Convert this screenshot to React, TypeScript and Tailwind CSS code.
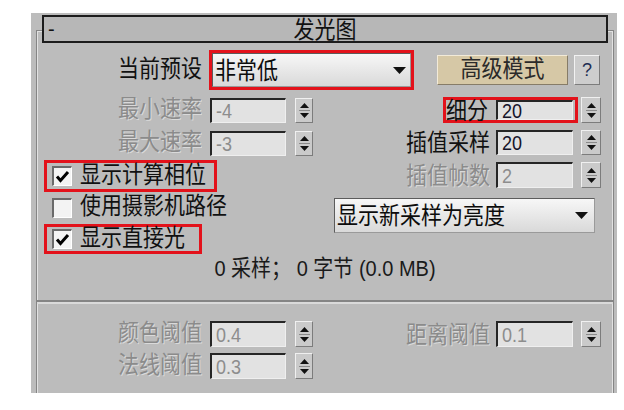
import type { ReactNode } from "react";

const Label = ({ children, dim }: { children: ReactNode; dim?: boolean }) => (
  <span
    className={
      dim
        ? "inline-block scale-y-[1.12] text-[21px] leading-none text-[#8b8b8b] [text-shadow:1px_1px_0_#dadada]"
        : "inline-block scale-y-[1.12] text-[21px] leading-none text-[#111]"
    }
  >
    {children}
  </span>
);

const Field = ({ value, dim, className }: { value: string; dim?: boolean; className: string }) => (
  <div
    className={`${className} flex items-center pl-[4px] bg-[#e2e2e2] border-t-2 border-l-2 border-t-[#262626] border-l-[#262626] border-b border-r border-b-[#efefef] border-r-[#efefef] text-[18px] leading-none ${
      dim ? "text-[#8d8d8d]" : "text-[#15152a]"
    }`}
  >
    <span className="inline-block scale-y-[1.15]">{value}</span>
  </div>
);

const Spinner = ({ className }: { className: string }) => (
  <div
    className={`${className} flex flex-col items-center justify-center gap-[2px] bg-[#cacaca] border border-t-[#f0f0f0] border-l-[#f0f0f0] border-b-[#7c7c7c] border-r-[#7c7c7c]`}
  >
    <svg width="9" height="5" viewBox="0 0 9 5">
      <path d="M0 5L4.5 0L9 5Z" fill="#111" />
    </svg>
    <div className="w-[11px] h-px bg-[#8a8a8a]" />
    <svg width="9" height="5" viewBox="0 0 9 5">
      <path d="M0 0H9L4.5 5Z" fill="#111" />
    </svg>
  </div>
);

const Check = ({ checked }: { checked?: boolean }) => (
  <div className="w-[20px] h-[20px] shrink-0 bg-[#f3f3f3] border-t-2 border-l-2 border-t-[#6a6a6a] border-l-[#6a6a6a] border-b border-r border-b-[#ffffff] border-r-[#ffffff] flex items-center justify-center">
    {checked && (
      <svg width="16" height="16" viewBox="0 0 16 16">
        <path d="M2 7.5L5.5 11.5L13 3" stroke="#000" strokeWidth="3" fill="none" />
      </svg>
    )}
  </div>
);

const Combo = ({ text, className }: { text: string; className: string }) => (
  <div
    className={`${className} flex items-center justify-between bg-linear-to-b from-[#f7f7f7] to-[#d9d9d9] border border-t-[#5c5c5c] border-l-[#5c5c5c] border-b-[#9a9a9a] border-r-[#9a9a9a]`}
  >
    <span className="inline-block scale-y-[1.12] text-[21px] leading-none text-[#0c0c0c]">{text}</span>
    <svg width="13" height="7" viewBox="0 0 13 7">
      <path d="M0 0H13L6.5 7Z" fill="#111" />
    </svg>
  </div>
);

const LeftNumRow = ({ label, value, className }: { label: string; value: string; className: string }) => (
  <div className={`${className} flex items-center`}>
    <div className="w-[165px] text-right">
      <Label dim>{label}</Label>
    </div>
    <Field value={value} dim className="ml-[8px] w-[76px] h-full" />
    <Spinner className="ml-[9px] w-[18px] h-full" />
  </div>
);

const RightNumRow = ({
  label,
  value,
  dim,
  className,
}: {
  label: string;
  value: string;
  dim?: boolean;
  className: string;
}) => (
  <div className={`${className} flex items-center justify-end pr-[12px]`}>
    <Label dim={dim}>{label}</Label>
    <Field value={value} dim={dim} className="ml-[6px] w-[77px] h-full" />
    <Spinner className="ml-[8px] w-[20px] h-full" />
  </div>
);

export default function App() {
  return (
    <div className="w-[624px] h-[410px] overflow-hidden bg-white [font-family:'Liberation_Sans','Noto_Sans_CJK_SC',sans-serif]">
      <div className="ml-[31px] mt-[13px] w-[586px] h-[380px] bg-[#bcbcbc] pt-[17px] pl-[5px]">
        <div className="w-[578px] h-[363px] border-t border-l border-r border-[#858585] shadow-[inset_1px_1px_0_#e2e2e2,inset_-1px_0_0_#e2e2e2]">
          {/* rollout title */}
          <div className="-mt-[16px] ml-[5px] w-[566px] h-[28px] border-2 border-[#1c1c1c] bg-[#b7b7b7] grid grid-cols-[1fr_auto_1fr] items-center">
            <span className="pl-[4px] text-[20px] leading-none text-[#111]">-</span>
            <Label>发光图</Label>
            <span />
          </div>

          {/* preset row */}
          <div className="mt-[7px] h-[40px] flex items-center">
            <div className="w-[165px] text-right">
              <Label>当前预设</Label>
            </div>
            <div className="ml-[7px] w-[205px] h-[40px] border-[3px] border-[#e3121b]">
              <Combo text="非常低" className="w-full h-full pl-[2px] pr-[4px]" />
            </div>
            <button className="ml-[23px] w-[131px] h-[30px] bg-[#d6c8a6] border border-t-[#f2ead8] border-l-[#f2ead8] border-b-[#867c68] border-r-[#867c68] text-[#2a2a2a]">
              <span className="inline-block scale-y-[1.12] text-[21px] leading-none">高级模式</span>
            </button>
            <button className="ml-[6px] w-[26px] h-[30px] bg-[#cdcdcd] border border-t-[#f2f2f2] border-l-[#f2f2f2] border-b-[#7c7c7c] border-r-[#7c7c7c] text-[18px] leading-none text-[#1f2d52]">
              ?
            </button>
          </div>

          {/* upper two columns */}
          <div className="flex">
            <div className="w-[297px]">
              <LeftNumRow label="最小速率" value="-4" className="mt-[8px] h-[25px]" />
              <LeftNumRow label="最大速率" value="-3" className="mt-[8px] h-[25px]" />
              <div className="mt-[4px] ml-[7px] w-[173px] h-[32px] border-[3px] border-[#e3121b] flex items-center pl-[5px]">
                <Check checked />
                <span className="ml-[8px]">
                  <Label>显示计算相位</Label>
                </span>
              </div>
              <div className="mt-[3px] ml-[15px] h-[25px] flex items-center">
                <Check />
                <span className="ml-[8px]">
                  <Label>使用摄影机路径</Label>
                </span>
              </div>
              <div className="mt-[4px] ml-[7px] w-[158px] h-[30px] border-[3px] border-[#e3121b] flex items-center pl-[5px]">
                <Check checked />
                <span className="ml-[8px]">
                  <Label>显示直接光</Label>
                </span>
              </div>
            </div>

            <div className="flex-1">
              <div className="mt-[7px] h-[26px] flex items-center justify-end pr-[12px]">
                <div className="h-full flex items-center border-[3px] border-[#e3121b] pr-[2px]">
                  <Label>细分</Label>
                  <Field value="20" className="ml-[8px] w-[77px] h-[20px]" />
                </div>
                <Spinner className="ml-[3px] w-[20px] h-full" />
              </div>
              <RightNumRow label="插值采样" value="20" className="mt-[7px] h-[25px]" />
              <RightNumRow label="插值帧数" value="2" dim className="mt-[7px] h-[26px]" />
              <Combo text="显示新采样为亮度" className="mt-[10px] w-[261px] h-[35px] pl-[2px] pr-[6px]" />
            </div>
          </div>

          {/* stats */}
          <div className="mt-[1px] h-[26px] flex items-center justify-center text-[#1a1a1a]">
            <span className="inline-block scale-y-[1.12] text-[20px] leading-none">0 采样； 0 字节 (0.0 MB)</span>
          </div>

          {/* separator */}
          <div className="mt-[19px] h-[2px] bg-[#858585]" />
          <div className="h-[2px] bg-[#dadada]" />

          {/* thresholds */}
          <div className="mt-[17px] h-[26px] flex">
            <LeftNumRow label="颜色阈值" value="0.4" className="w-[297px] h-full" />
            <RightNumRow label="距离阈值" value="0.1" dim className="flex-1 h-full" />
          </div>
          <LeftNumRow label="法线阈值" value="0.3" className="mt-[6px] h-[26px]" />
        </div>
      </div>
    </div>
  );
}
